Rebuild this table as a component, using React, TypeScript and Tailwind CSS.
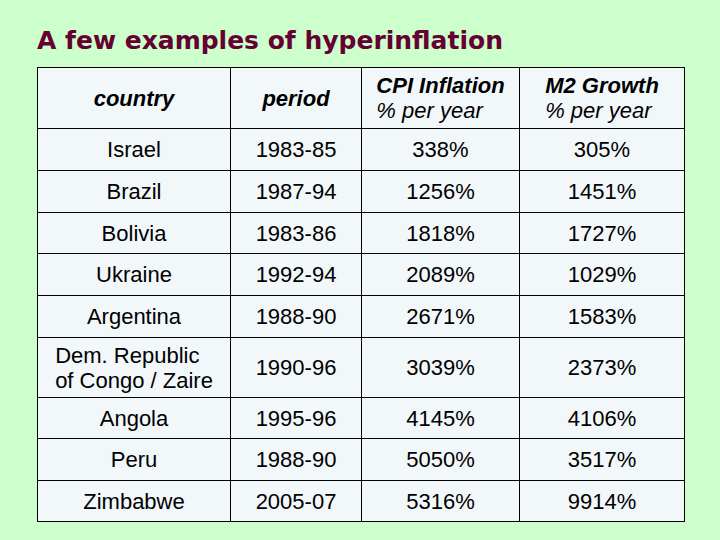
const rows: { country: string[]; period: string; cpi: string; m2: string; h: string }[] = [
  { country: ["Israel"], period: "1983-85", cpi: "338%", m2: "305%", h: "h-[42px]" },
  { country: ["Brazil"], period: "1987-94", cpi: "1256%", m2: "1451%", h: "h-[42px]" },
  { country: ["Bolivia"], period: "1983-86", cpi: "1818%", m2: "1727%", h: "h-[41px]" },
  { country: ["Ukraine"], period: "1992-94", cpi: "2089%", m2: "1029%", h: "h-[42px]" },
  { country: ["Argentina"], period: "1988-90", cpi: "2671%", m2: "1583%", h: "h-[42px]" },
  {
    country: ["Dem. Republic", "of Congo / Zaire"],
    period: "1990-96",
    cpi: "3039%",
    m2: "2373%",
    h: "h-[60px]",
  },
  { country: ["Angola"], period: "1995-96", cpi: "4145%", m2: "4106%", h: "h-[41px]" },
  { country: ["Peru"], period: "1988-90", cpi: "5050%", m2: "3517%", h: "h-[42px]" },
  { country: ["Zimbabwe"], period: "2005-07", cpi: "5316%", m2: "9914%", h: "h-[41px]" },
];

const cell = "border border-black text-center align-middle p-0";

export default function App() {
  return (
    <div className="h-[540px] w-[720px] bg-[#ccffcc] pl-[37px] pt-[27px] font-['Liberation_Sans',Arial,sans-serif] text-black">
      <h1 className="font-['DejaVu_Sans',Verdana,sans-serif] text-[25px] font-bold leading-[27px] text-[#660033]">
        A few examples of hyperinflation
      </h1>
      <table className="mt-[13px] w-[647px] table-fixed border-collapse bg-[#f2f7fa] text-[22px] leading-[25px]">
        <colgroup>
          <col className="w-[193px]" />
          <col className="w-[131px]" />
          <col className="w-[158px]" />
          <col className="w-[165px]" />
        </colgroup>
        <thead>
          <tr className="h-[61px]">
            <th className={`${cell} font-bold italic`}>country</th>
            <th className={`${cell} font-bold italic`}>period</th>
            <th className={cell}>
              <span className="inline-block text-left italic">
                <span className="font-bold">CPI Inflation</span>
                <br />
                <span className="font-normal">% per year</span>
              </span>
            </th>
            <th className={cell}>
              <span className="inline-block text-left italic">
                <span className="font-bold">M2 Growth</span>
                <br />
                <span className="font-normal">% per year</span>
              </span>
            </th>
          </tr>
        </thead>
        <tbody>
          {rows.map((r) => (
            <tr key={r.period + r.cpi} className={r.h}>
              <td className={cell}>
                <span className="inline-block text-left">
                  {r.country.map((line, i) => (
                    <span key={i} className="block">
                      {line}
                    </span>
                  ))}
                </span>
              </td>
              <td className={cell}>{r.period}</td>
              <td className={cell}>{r.cpi}</td>
              <td className={cell}>{r.m2}</td>
            </tr>
          ))}
        </tbody>
      </table>
    </div>
  );
}
